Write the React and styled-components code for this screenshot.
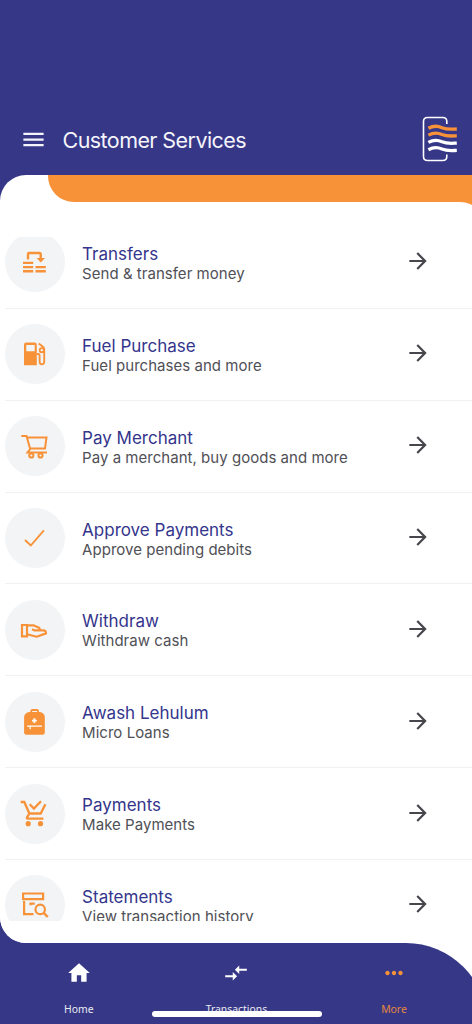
import React from 'react';
import styled, { createGlobalStyle } from 'styled-components';
import { MdMenu, MdArrowForward, MdHome, MdCompareArrows, MdMoreHoriz } from 'react-icons/md';

const INDIGO = '#363787';
const ORANGE = '#f89238';

const GlobalStyle = createGlobalStyle`
  * { box-sizing: border-box; }
  body { margin: 0; background: #fff; }
`;

const Screen = styled.div`
  position: relative;
  width: 472px;
  height: 1024px;
  overflow: hidden;
  display: flex;
  flex-direction: column;
  background: ${INDIGO};
  font-family: Inter, 'Liberation Sans', sans-serif;
`;

const Header = styled.header`
  height: 175px;
  flex: none;
  display: flex;
  align-items: center;
  padding: 103px 15px 0 20px;
  color: #f4f4fa;
`;

const Title = styled.h1`
  flex: 1;
  margin: 2px 0 0 15.5px;
  font-size: 21.5px;
  font-weight: 400;
  line-height: 28px;
  letter-spacing: -0.57px;
`;

const Panel = styled.main`
  height: 768px;
  flex: none;
  display: flex;
  flex-direction: column;
  background: #fff;
  border-radius: 26px 0 0 26px;
  overflow: hidden;
`;

const Band = styled.div`
  height: 27px;
  flex: none;
  margin-left: 48px;
  background: ${ORANGE};
  border-bottom-left-radius: 26px;
`;

const Sheet = styled.div`
  flex: 1;
  background: linear-gradient(${ORANGE} 26px, #fff 26px);
  background-position: right top;
  background-repeat: no-repeat;
  background-size: 40px 100%;
`;

const SheetSurface = styled.div`
  width: 486px;
  height: 100%;
  padding: 35px 14px 0 0;
  background: #fff;
  border-top-right-radius: 26px;
`;

const List = styled.div`
  height: 684px;
  overflow: hidden;
`;

const Rows = styled.div`
  margin: -20px 0 0 4.6px;
`;

const Row = styled.div`
  height: 91.86px;
  display: flex;
  align-items: center;
  border-bottom: 1px solid #f1f1f3;
`;

const IconDisc = styled.div`
  width: 60px;
  height: 60px;
  flex: none;
  border-radius: 50%;
  background: #f2f4f6;

  svg { display: block; }
`;

const Copy = styled.div`
  flex: 1;
  margin: 3px 0 0 17.5px;
  white-space: nowrap;
`;

const Name = styled.div`
  font-size: 17px;
  line-height: 20px;
  color: #34358c;
`;

const Detail = styled.div`
  font-size: 15px;
  line-height: 20px;
  letter-spacing: 0.03px;
  color: #505056;
`;

const Go = styled(MdArrowForward)`
  flex: none;
  margin: -2px 41px 0 0;
  color: #46464c;
`;

const NavArea = styled.footer`
  height: 81px;
  flex: none;
  background: linear-gradient(to right, ${INDIGO} 50%, #fff 50%);
`;

const NavSurface = styled.nav`
  width: 487px;
  height: 81px;
  padding-right: 15px;
  display: grid;
  grid-template-columns: repeat(3, 157.6px);
  background: ${INDIGO};
  border-top-right-radius: 81px;
`;

const Tab = styled.div`
  display: flex;
  flex-direction: column;
  align-items: center;
  padding-top: 17px;
  color: ${(p) => (p.$active ? ORANGE : '#fff')};
`;

const TabLabel = styled.span`
  margin-top: 15px;
  font-family: 'Noto Sans', sans-serif;
  font-size: 10.4px;
  line-height: 16px;
  opacity: 0.9;
`;

const HomeIndicator = styled.div`
  position: absolute;
  left: 152px;
  bottom: 7px;
  width: 170px;
  height: 6px;
  border-radius: 3px;
  background: #fff;
`;

const Glyph = ({ children, width = 2 }) => (
  <svg width="60" height="60" viewBox="0 0 60 60" fill="none" stroke={ORANGE} strokeWidth={width}>
    {children}
  </svg>
);

const TransferIcon = () => (
  <Glyph width={2.4}>
    <path d="M23 27.5V22.2Q23 21 24.2 21H34.5Q35.7 21 35.7 22.2V27" />
    <path d="M31.6 26H40L35.8 30.5Z" fill={ORANGE} stroke="none" />
    <path d="M18 30.9H28.2M18 35.1H28.2M18 39.3H28.2M30.5 35.1H40.8M30.5 39.3H40.8" />
  </Glyph>
);

const FuelIcon = () => (
  <Glyph width={1.9}>
    <path
      fillRule="evenodd"
      stroke="none"
      fill={ORANGE}
      d="M21.3 18.4H29.5Q31.8 18.4 31.8 20.7V41.3H19V20.7Q19 18.4 21.3 18.4ZM21.3 21V27.3H29.7V21Z"
    />
    <path d="M31.8 30H33.2Q34.6 30 34.6 31.4V37.5Q34.6 40.3 36.9 40.3T39.2 37.5V25.5Q39.2 24 38.2 23L33.7 19.4" />
    <circle cx="36.8" cy="26.2" r="2.1" />
  </Glyph>
);

const CartIcon = () => (
  <Glyph width={2}>
    <path d="M16.3 20H21.5L25.2 33L22.5 36.4H42M22 21.5H41.5L40 32.5H25" />
    <circle cx="26.3" cy="39.5" r="2.1" />
    <circle cx="35.5" cy="39.5" r="2.1" />
  </Glyph>
);

const CheckIcon = () => (
  <Glyph width={1.9}>
    <path d="M20 32L25.8 37.5L38.9 22.4" />
  </Glyph>
);

const HandIcon = () => (
  <Glyph width={2.2}>
    <path d="M17 25H22V36.4H17Z" />
    <path
      d="M22 25.3H28.3L33.5 27.4Q35.2 28.2 34.5 30.4H29.7L27 29.3M34.5 30.4H38.8Q41 30.8 41 33.4L31.7 36.7L22 34.3"
      strokeLinejoin="round"
    />
  </Glyph>
);

const BackpackIcon = () => (
  <Glyph width={1.8}>
    <path d="M26.2 21V19.2Q26.2 18 27.4 18H31.9Q33.1 18 33.1 19.2V21" />
    <path
      d="M24 20H35.2Q39.8 21 39.8 25.5V40.5Q39.8 42.7 37.6 42.7H21.3Q19.1 42.7 19.1 40.5V25.5Q19.1 21 24 20Z"
      fill={ORANGE}
      stroke="none"
    />
    <path d="M27 28.6H31.8M29.4 26.2V31" stroke="#fff" />
    <path d="M22 34.2H37M25.2 34V37.2" stroke="#fff" strokeWidth="1.2" />
  </Glyph>
);

const CartCheckIcon = () => (
  <Glyph width={2.3}>
    <path d="M15.7 18H19.3L24.4 29.5H35.7L40.4 20.2M24.4 29.5L22 33.3Q21.5 34.7 23 34.7H38.4" />
    <path d="M24.7 20.2L28.9 24.5L36 17.3" />
    <circle cx="23.2" cy="39.7" r="2.6" fill={ORANGE} stroke="none" />
    <circle cx="35.5" cy="39.7" r="2.6" fill={ORANGE} stroke="none" />
  </Glyph>
);

const StatementIcon = () => (
  <Glyph width={2.2}>
    <path d="M18.1 18.5H38.1V24.1H18.1Z" />
    <path d="M19.1 26V39.2H28.5M24.6 28.6H29.8M25.5 28V30.3" />
    <circle cx="35.2" cy="34.4" r="4.7" />
    <path d="M38.7 37.9L42.7 42" strokeWidth="2.5" />
  </Glyph>
);

const Logo = () => (
  <svg width="37" height="46" viewBox="0 0 37 46" fill="none">
    <path
      d="M26.8 8V5.5Q26.8 1.5 22.8 1.5H7.5Q3.5 1.5 3.5 5.5V40.5Q3.5 44.5 7.5 44.5H22.8Q26.8 44.5 26.8 40.5V38.5"
      stroke="#fff"
      strokeWidth="1.6"
    />
    {[11.4, 18.2, 25.5, 32.8].map((y, i) => (
      <path
        key={y}
        d={`M8.4 ${y + 0.9}C14 ${y - 2.2} 17.5 ${y - 1.8} 22 ${y + 0.3}C27 ${y + 2.4} 30 ${y + 1.9} 36.8 ${y + 1.6}`}
        stroke={i < 2 ? ORANGE : '#fff'}
        strokeWidth="3.3"
      />
    ))}
  </svg>
);

const services = [
  ['Transfers', 'Send & transfer money', TransferIcon],
  ['Fuel Purchase', 'Fuel purchases and more', FuelIcon],
  ['Pay Merchant', 'Pay a merchant, buy goods and more', CartIcon],
  ['Approve Payments', 'Approve pending debits', CheckIcon],
  ['Withdraw', 'Withdraw cash', HandIcon],
  ['Awash Lehulum', 'Micro Loans', BackpackIcon],
  ['Payments', 'Make Payments', CartCheckIcon],
  ['Statements', 'View transaction history', StatementIcon],
];

const tabs = [
  ['Home', MdHome],
  ['Transactions', MdCompareArrows],
  ['More', MdMoreHoriz],
];

export default function App() {
  return (
    <Screen>
      <GlobalStyle />
      <Header>
        <MdMenu size={27} />
        <Title>Customer Services</Title>
        <Logo />
      </Header>
      <Panel>
        <Band />
        <Sheet>
          <SheetSurface>
            <List>
              <Rows>
                {services.map(([name, detail, Icon]) => (
                  <Row key={name}>
                    <IconDisc>
                      <Icon />
                    </IconDisc>
                    <Copy>
                      <Name>{name}</Name>
                      <Detail>{detail}</Detail>
                    </Copy>
                    <Go size={26} />
                  </Row>
                ))}
              </Rows>
            </List>
          </SheetSurface>
        </Sheet>
      </Panel>
      <NavArea>
        <NavSurface>
          {tabs.map(([label, Icon]) => (
            <Tab key={label} $active={label === 'More'}>
              <Icon size={26} />
              <TabLabel>{label}</TabLabel>
            </Tab>
          ))}
        </NavSurface>
      </NavArea>
      <HomeIndicator />
    </Screen>
  );
}
